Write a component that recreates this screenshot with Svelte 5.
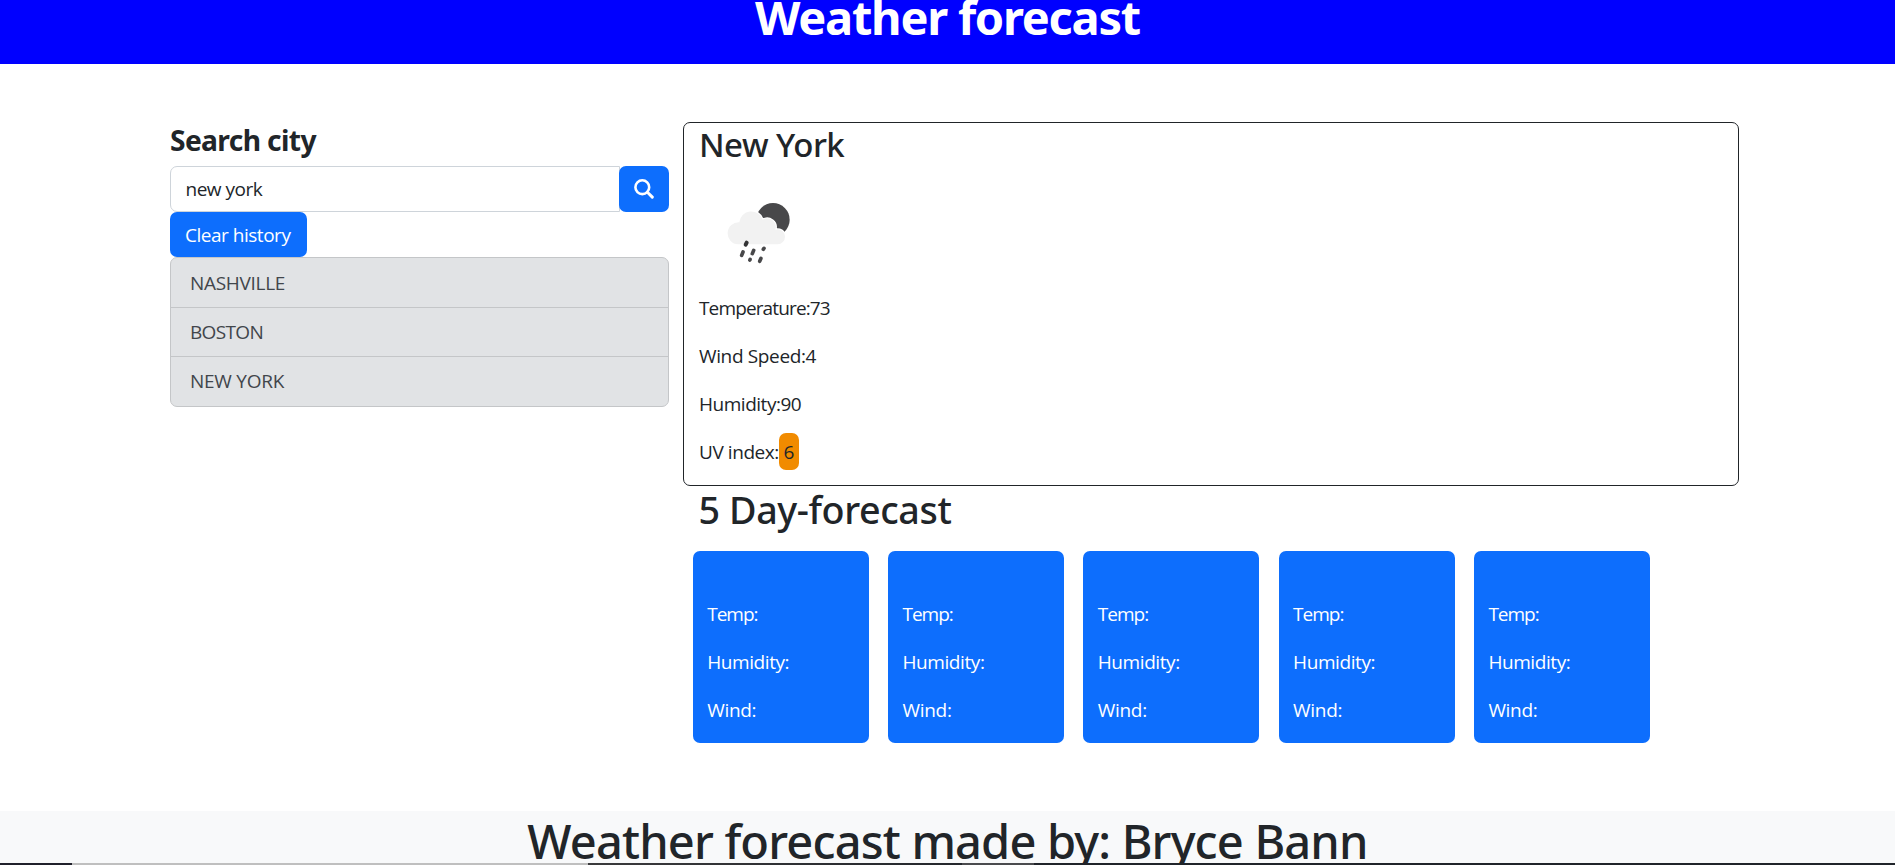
<script>
  const cities = [
    { name: 'NASHVILLE', ls: -0.3 },
    { name: 'BOSTON', ls: -0.65 },
    { name: 'NEW YORK', ls: -0.25 }
  ];
  const readings = [
    { text: 'Temperature:73', ls: -0.86 },
    { text: 'Wind Speed:4', ls: -0.36 },
    { text: 'Humidity:90', ls: -0.48 }
  ];
  const fields = [
    { text: 'Temp:', ls: -1 },
    { text: 'Humidity:', ls: -0.42 },
    { text: 'Wind:', ls: -0.3 }
  ];
  const days = [1, 2, 3, 4, 5];
  let query = $state('new york');
</script>

<div class="page">
  <header><h1>Weather forecast</h1></header>

  <main>
    <section class="search">
      <h4>Search city</h4>
      <div class="group">
        <input type="text" bind:value={query} />
        <button class="btn icon" aria-label="Search">
          <svg viewBox="0 0 20 20" width="20" height="20" fill="none" stroke="#fff" stroke-linecap="round">
            <circle cx="8.3" cy="8.2" r="6.9" stroke-width="2.6" />
            <path d="M13.4 13.2 18.3 18.1" stroke-width="3" />
          </svg>
        </button>
      </div>
      <button class="btn clear">Clear history</button>
      <ul>
        {#each cities as c}
          <li style="letter-spacing: {c.ls}px">{c.name}</li>
        {/each}
      </ul>
    </section>

    <section class="results">
      <div class="current">
        <h3>New York</h3>
        <div class="weather">
          <svg viewBox="0 0 240 225" width="80" height="75">
            <circle cx="162" cy="74" r="50" fill="#48484a" />
            <path
              d="M57 148A33 33 0 1 1 61 82A36 36 0 0 1 131 74A26 26 0 0 1 169 104A22.500 22.500 0 1 1 174 148Z"
              fill="#f2f2f2" stroke="#fff" stroke-width="7" paint-order="stroke" />
            <g stroke-linecap="round" stroke="#48484a" stroke-width="11">
              <path d="M80 149l3-6" stroke="#333335" stroke-width="12" />
              <path d="M68 181l4-10" />
              <path d="M100 176l4-10" />
              <path d="M133 163l2-3" />
              <path d="M92.500 195l1-2" />
              <path d="M122 199l4-9" />
            </g>
          </svg>
        </div>
        {#each readings as r}
          <p style="letter-spacing: {r.ls}px">{r.text}</p>
        {/each}
        <p class="uv"><span class="label">UV index:</span><span class="badge">6</span></p>
      </div>

      <h2>5 Day-forecast</h2>
      <div class="days">
        {#each days as day (day)}
          <div class="day">
            {#each fields as f}
              <p style="letter-spacing: {f.ls}px">{f.text}</p>
            {/each}
          </div>
        {/each}
      </div>
    </section>
  </main>

  <footer><h1>Weather forecast made by: Bryce Bann</h1></footer>
  <div class="strip"></div>
</div>

<style>
  .page {
    position: relative;
    width: 100%;
    height: 865px;
    overflow: hidden;
    display: flex;
    flex-direction: column;
    background: #fff;
    color: #212529;
    font: 19px/28.8px 'Open Sans', 'Noto Sans', sans-serif;
  }
  .page * { box-sizing: border-box; }
  h1, h2, h3, h4 {
    margin: 0;
    font-family: 'Noto Sans', sans-serif;
    font-weight: 500;
    line-height: 1.2;
    white-space: nowrap;
  }
  p { margin: 0 0 19.2px; white-space: nowrap; }

  header {
    flex: none;
    height: 64px;
    overflow: hidden;
    background: #00f;
    color: #fff;
    text-align: center;
  }
  header h1 {
    margin-top: -11px;
    font-size: 47px;
    line-height: 57.6px;
    font-weight: 700;
    letter-spacing: -1.25px;
  }

  main {
    flex: none;
    display: flex;
    gap: 14px;
    height: 747px;
    padding: 58px 156px 0 170px;
  }
  .search { width: 499px; }
  h4 {
    height: 44px;
    padding-top: 2px;
    font-size: 28.2px;
    font-weight: 700;
    letter-spacing: -0.63px;
  }
  .group { display: flex; height: 46px; }
  input {
    flex: 1;
    min-width: 0;
    margin-right: -1px;
    padding: 1px 14px 0 14.500px;
    border: 1.200px solid #ced4da;
    border-radius: 7px 0 0 7px;
    outline: 0;
    background: #fff;
    color: #212529;
    font: inherit;
    letter-spacing: -0.5px;
  }
  .btn {
    display: flex;
    align-items: center;
    border: 0;
    border-radius: 7px;
    background: #0d6efd;
    color: #fff;
    font: inherit;
  }
  .icon { position: relative; width: 50px; padding: 0 0 0 15px; }
  .clear {
    height: 45px;
    width: 137px;
    padding: 1px 0 0 15px;
    letter-spacing: -0.48px;
    white-space: nowrap;
  }
  ul {
    margin: 0;
    padding: 0;
    list-style: none;
    overflow: hidden;
    border: 1px solid #c4c6c8;
    border-radius: 7px;
    background: #e1e3e5;
    color: #41464b;
  }
  li { height: 49px; padding: 11px 20px 0 19px; }
  li + li { border-top: 1px solid #c4c6c8; padding-top: 10.400px; }
  li:last-child { height: 49.500px; }

  .results { flex: 1; }
  .current {
    height: 364px;
    padding: 2px 15px 0;
    border: 1px solid #212529;
    border-radius: 7px;
  }
  h3 { height: 49px; font-size: 33px; line-height: 40.300px; letter-spacing: -0.5px; }
  .weather { height: 120px; padding: 21px 0 0 20px; }
  .weather svg { display: block; }
  .uv { display: flex; }
  .label { width: 80px; letter-spacing: -0.43px; }
  .badge {
    margin: -4.500px 0 -3px;
    padding: 4.500px 0 3px;
    width: 20px;
    border-radius: 7px;
    background: #f18b00;
    text-align: center;
  }
  h2 { height: 65px; padding: 1px 0 0 15.500px; font-size: 37.700px; line-height: 46px; letter-spacing: -0.4px; }
  .days { display: flex; gap: 19.300px; padding-left: 9.700px; }
  .day {
    width: 176px;
    height: 192px;
    padding: 49px 0 0 14.500px;
    border-radius: 7px;
    background: #0d6efd;
    color: #fff;
  }

  footer { flex: none; height: 60px; padding-top: 2px; background: #f8f9fa; text-align: center; }
  footer h1 { font-size: 47px; line-height: 57.600px; letter-spacing: -0.83px; }
  .strip {
    position: absolute;
    left: 0;
    bottom: 0;
    width: 100%;
    height: 2px;
    background: linear-gradient(90deg, #20202b 72px, #bfbfbf 72px 588px, #3a3a3c 588px, #24272c 962px, #4a4b4e 962px 1034px, #20242a 1034px);
  }
</style>
